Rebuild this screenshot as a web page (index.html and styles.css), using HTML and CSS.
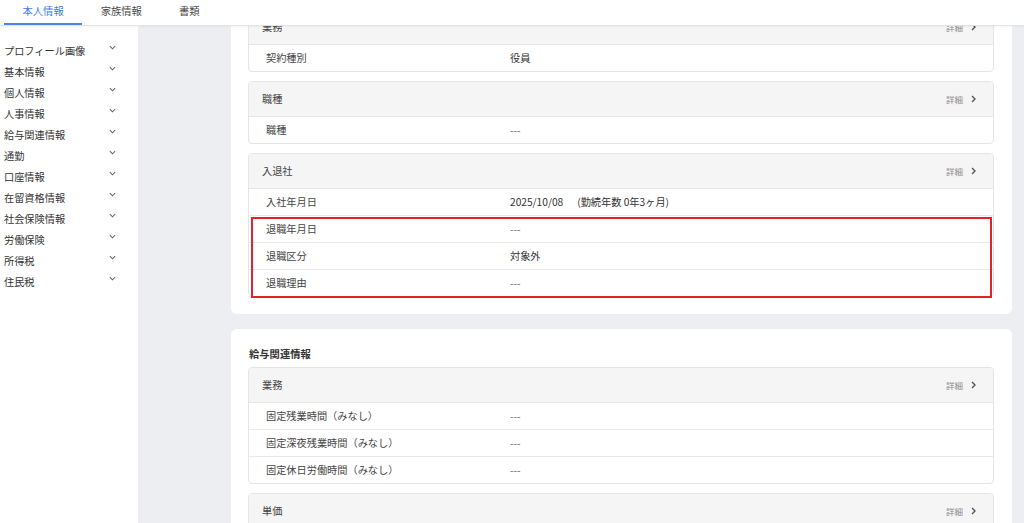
FILE: index.html
```html
<!DOCTYPE html>
<html lang="ja">
<head>
<meta charset="utf-8">
<title>本人情報</title>
<link rel="stylesheet" href="styles.css">
</head>
<body>
<header class="topbar">
  <nav class="tabs">
    <span class="tab active">本人情報</span>
    <span class="tab">家族情報</span>
    <span class="tab">書類</span>
  </nav>
</header>
<div class="layout">
  <aside class="sidebar">
    <ul class="menu">
      <li>プロフィール画像<svg class="chev" viewBox="0 0 8 5"><path d="M1 1l3 3 3-3"/></svg></li>
      <li>基本情報<svg class="chev" viewBox="0 0 8 5"><path d="M1 1l3 3 3-3"/></svg></li>
      <li>個人情報<svg class="chev" viewBox="0 0 8 5"><path d="M1 1l3 3 3-3"/></svg></li>
      <li>人事情報<svg class="chev" viewBox="0 0 8 5"><path d="M1 1l3 3 3-3"/></svg></li>
      <li>給与関連情報<svg class="chev" viewBox="0 0 8 5"><path d="M1 1l3 3 3-3"/></svg></li>
      <li>通勤<svg class="chev" viewBox="0 0 8 5"><path d="M1 1l3 3 3-3"/></svg></li>
      <li>口座情報<svg class="chev" viewBox="0 0 8 5"><path d="M1 1l3 3 3-3"/></svg></li>
      <li>在留資格情報<svg class="chev" viewBox="0 0 8 5"><path d="M1 1l3 3 3-3"/></svg></li>
      <li>社会保険情報<svg class="chev" viewBox="0 0 8 5"><path d="M1 1l3 3 3-3"/></svg></li>
      <li>労働保険<svg class="chev" viewBox="0 0 8 5"><path d="M1 1l3 3 3-3"/></svg></li>
      <li>所得税<svg class="chev" viewBox="0 0 8 5"><path d="M1 1l3 3 3-3"/></svg></li>
      <li>住民税<svg class="chev" viewBox="0 0 8 5"><path d="M1 1l3 3 3-3"/></svg></li>
    </ul>
  </aside>
  <main class="main">
    <div class="scroller">
      <section class="card">
        <h2 class="card-title">人事情報</h2>
        <div class="sub">
          <div class="sub-head"><span>業務</span><span class="detail">詳細<svg class="arrow" viewBox="0 0 5 8"><path d="M1 1l3 3-3 3"/></svg></span></div>
          <div class="row"><span class="label">契約種別</span><span class="value">役員</span></div>
        </div>
        <div class="sub">
          <div class="sub-head"><span>職種</span><span class="detail">詳細<svg class="arrow" viewBox="0 0 5 8"><path d="M1 1l3 3-3 3"/></svg></span></div>
          <div class="row"><span class="label">職種</span><span class="value dash">---</span></div>
        </div>
        <div class="sub">
          <div class="sub-head"><span>入退社</span><span class="detail">詳細<svg class="arrow" viewBox="0 0 5 8"><path d="M1 1l3 3-3 3"/></svg></span></div>
          <div class="row"><span class="label">入社年月日</span><span class="value">2025/10/08<span class="tenure">(勤続年数 0年3ヶ月)</span></span></div>
          <div class="highlight">
            <div class="row"><span class="label">退職年月日</span><span class="value dash">---</span></div>
            <div class="row"><span class="label">退職区分</span><span class="value">対象外</span></div>
            <div class="row"><span class="label">退職理由</span><span class="value dash">---</span></div>
          </div>
        </div>
      </section>
      <section class="card">
        <h2 class="card-title">給与関連情報</h2>
        <div class="sub">
          <div class="sub-head"><span>業務</span><span class="detail">詳細<svg class="arrow" viewBox="0 0 5 8"><path d="M1 1l3 3-3 3"/></svg></span></div>
          <div class="row"><span class="label">固定残業時間（みなし）</span><span class="value dash">---</span></div>
          <div class="row"><span class="label">固定深夜残業時間（みなし）</span><span class="value dash">---</span></div>
          <div class="row"><span class="label">固定休日労働時間（みなし）</span><span class="value dash">---</span></div>
        </div>
        <div class="sub">
          <div class="sub-head"><span>単価</span><span class="detail">詳細<svg class="arrow" viewBox="0 0 5 8"><path d="M1 1l3 3-3 3"/></svg></span></div>
          <div class="row"><span class="label">基本給</span><span class="value dash">---</span></div>
        </div>
      </section>
    </div>
  </main>
</div>
</body>
</html>
```

FILE: styles.css
```css
* { box-sizing: border-box; }
html, body {
  margin: 0;
  padding: 0;
  height: 100%;
  overflow: hidden;
}
body {
  font-family: "Noto Sans CJK JP", "Noto Sans", sans-serif;
  font-size: 10px;
  color: #3a3a3a;
  background: #fff;
  display: flex;
  flex-direction: column;
}
.topbar {
  flex: 0 0 auto;
  height: 26px;
  background: #fff;
  border-bottom: 1px solid #e2e3e6;
  box-shadow: 0 1px 2px rgba(0,0,0,0.04);
  padding-left: 4px;
  position: relative;
  z-index: 2;
}
.tabs {
  display: flex;
  height: 25px;
}
.tab {
  padding: 0 18.5px;
  height: 25px;
  line-height: 22px;
  font-size: 10.3px;
  color: #4a4a4a;
  border-bottom: 2px solid transparent;
}
.tab.active {
  color: #3f7be6;
  border-bottom-color: #4a86ee;
}
.layout {
  flex: 1 1 auto;
  display: flex;
  min-height: 0;
}
.sidebar {
  flex: 0 0 138px;
  background: #fff;
}
.menu {
  list-style: none;
  margin: 0;
  padding: 14px 0 0 4px;
}
.menu li {
  display: flex;
  align-items: center;
  justify-content: space-between;
  width: 112px;
  height: 21px;
  font-size: 10.2px;
  color: #333;
}
.chev {
  width: 7px;
  height: 5px;
  margin-top: -6px;
  fill: none;
  stroke: #666;
  stroke-width: 1.2;
}
.main {
  flex: 1 1 auto;
  background: #edeef1;
  overflow: hidden;
  padding: 0 12px 0 93px;
}
.scroller {
  margin-top: -55px;
  display: flex;
  flex-direction: column;
  gap: 15px;
}
.card {
  background: #fff;
  border-radius: 6px;
  padding: 0 18px 17px 17px;
}
.card-title {
  margin: 0 0 7px 1px;
  padding-top: 19px;
  font-size: 10.3px;
  line-height: 12px;
  font-weight: bold;
  color: #333;
}
.sub {
  border: 1px solid #e4e5e7;
  border-radius: 4px;
  margin-bottom: 9px;
}
.sub:last-child { margin-bottom: 0; }
.sub-head {
  height: 35px;
  background: #f5f5f6;
  border-bottom: 1px solid #e6e7e9;
  border-radius: 4px 4px 0 0;
  display: flex;
  align-items: center;
  justify-content: space-between;
  padding: 0 17px 1px 13px;
  font-size: 10.2px;
  color: #444;
}
.detail {
  display: flex;
  align-items: center;
  font-size: 8.5px;
  color: #8a8a8a;
}
.arrow {
  width: 5px;
  height: 8px;
  margin-left: 8px;
  fill: none;
  stroke: #555;
  stroke-width: 1.4;
}
.row {
  display: flex;
  align-items: center;
  height: 27px;
  border-top: 1px solid #e8e9eb;
  font-size: 10.2px;
  padding-bottom: 1px;
}
.sub-head + .row { border-top: none; height: 26px; }
.label {
  flex: 0 0 261px;
  padding-left: 17px;
  color: #444;
}
.value { color: #333; }
.value.dash { color: #666; }
.tenure { margin-left: 14px; }
.highlight {
  position: relative;
}
.highlight::after {
  content: "";
  position: absolute;
  top: 2px;
  left: 2px;
  right: 1px;
  bottom: -2px;
  border: 2.5px solid #e3232b;
  pointer-events: none;
}
```
